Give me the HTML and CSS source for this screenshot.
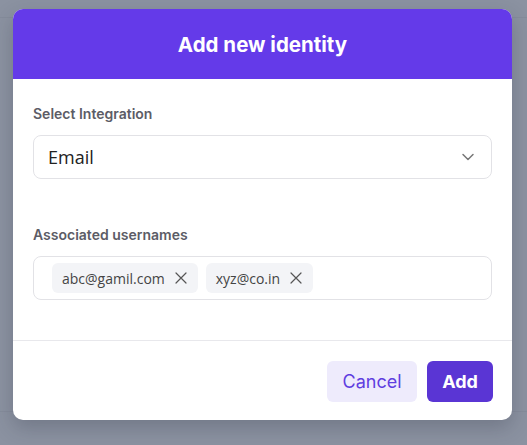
FILE: index.html
```html
<!DOCTYPE html>
<html>
<head>
<meta charset="utf-8">
<link rel="stylesheet" href="styles.css">
</head>
<body>
<div class="backdrop">
  <div class="bg-line bg-line-top"></div>
  <div class="bg-line bg-line-bottom"></div>
  <div class="modal">
    <div class="modal-header">Add new identity</div>
    <div class="modal-body">
      <div class="field">
        <div class="label">Select Integration</div>
        <div class="select">
          <span class="select-value">Email</span>
          <svg class="chevron" width="14" height="14" viewBox="0 0 14 14"><path d="M2 4.5 L7 9.5 L12 4.5" fill="none" stroke="#777" stroke-width="1.5" stroke-linecap="round" stroke-linejoin="round"/></svg>
        </div>
      </div>
      <div class="field field-second">
        <div class="label">Associated usernames</div>
        <div class="tags">
          <span class="tag">abc@gamil.com
            <svg class="x" width="12" height="12" viewBox="0 0 12 12"><path d="M1 1 L11 11 M11 1 L1 11" stroke="#555" stroke-width="1.2" stroke-linecap="round"/></svg>
          </span>
          <span class="tag">xyz@co.in
            <svg class="x" width="12" height="12" viewBox="0 0 12 12"><path d="M1 1 L11 11 M11 1 L1 11" stroke="#555" stroke-width="1.2" stroke-linecap="round"/></svg>
          </span>
        </div>
      </div>
    </div>
    <div class="modal-footer">
      <button class="btn btn-cancel">Cancel</button>
      <button class="btn btn-add">Add</button>
    </div>
  </div>
</div>
</body>
</html>
```
FILE: styles.css
```css
html, body {
  margin: 0;
  padding: 0;
}
body {
  width: 527px;
  height: 445px;
  overflow: hidden;
  background: #8b92a1;
  font-family: Inter, "Noto Sans", sans-serif;
}
.backdrop {
  position: relative;
  height: 445px;
  padding: 9px 15px 0 13px;
  box-sizing: border-box;
}
.bg-line {
  position: absolute;
  left: 0;
  right: 0;
  height: 1px;
  background: #858c9b;
}
.bg-line-top { top: 17px; }
.bg-line-bottom { top: 411px; }
.modal {
  position: relative;
  width: 499px;
  height: 411px;
  background: #fff;
  border-radius: 10px;
  overflow: hidden;
  box-shadow: 0 8px 20px rgba(40, 45, 60, 0.25);
  display: flex;
  flex-direction: column;
}
.modal-header {
  height: 70px;
  flex: none;
  background: #643ae9;
  color: #fff;
  font-weight: 700;
  font-size: 20.5px;
  display: flex;
  align-items: center;
  justify-content: center;
  letter-spacing: 0;
  padding-top: 1px;
  box-sizing: border-box;
}
.modal-body {
  padding: 26px 20px 0 20px;
  height: 262px;
  flex: none;
  box-sizing: border-box;
  border-bottom: 1px solid #e8e8ec;
}
.label {
  font-size: 14px;
  font-weight: 600;
  color: #5c5c66;
  line-height: 18px;
}
.select {
  margin-top: 12px;
  height: 44px;
  border: 1px solid #e2e2e6;
  border-radius: 8px;
  box-sizing: border-box;
  display: flex;
  align-items: center;
  justify-content: space-between;
  padding: 0 16px 0 14px;
}
.select-value {
  font-family: "Open Sans", "Noto Sans", sans-serif;
  font-size: 18px;
  color: #222;
}
.field-second {
  margin-top: 47px;
}
.tags {
  margin-top: 12px;
  height: 44px;
  border: 1px solid #e2e2e6;
  border-radius: 8px;
  box-sizing: border-box;
  display: flex;
  align-items: center;
  gap: 8px;
  padding: 0 18px;
}
.tag {
  height: 30px;
  background: #f3f4f7;
  border-radius: 6px;
  display: flex;
  align-items: center;
  gap: 10px;
  padding: 0 11px 0 10px;
  font-family: "Open Sans", "Noto Sans", sans-serif;
  font-size: 14px;
  color: #444;
}
.modal-footer {
  flex: 1;
  display: flex;
  justify-content: flex-end;
  align-items: center;
  gap: 10px;
  padding: 2px 19px 0 0;
}
.btn {
  height: 41px;
  border: none;
  border-radius: 6px;
  font-family: Inter, "Noto Sans", sans-serif;
  font-size: 18px;
  padding: 0;
}
.btn-cancel {
  width: 90px;
  background: #eeebfc;
  color: #5f3ee0;
  font-weight: 400;
}
.btn-add {
  width: 66px;
  background: #5a35d4;
  color: #fff;
  font-weight: 700;
}
```
